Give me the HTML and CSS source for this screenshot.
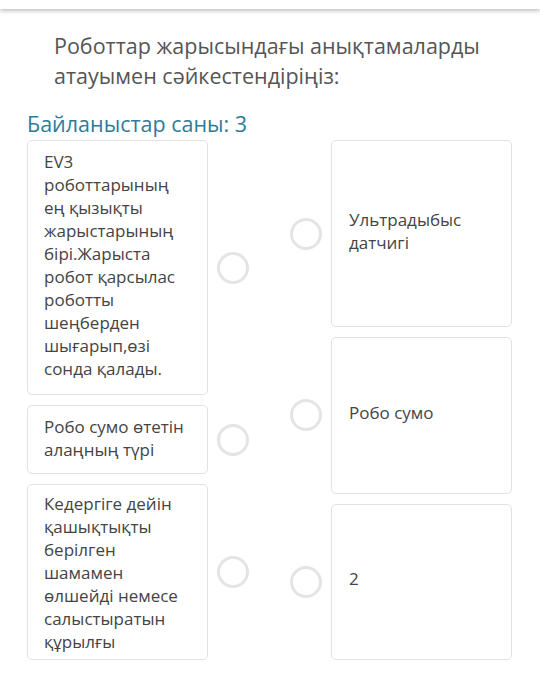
FILE: index.html
```html
<!DOCTYPE html>
<html lang="kk">
<head>
  <meta charset="UTF-8">
  <meta name="viewport" content="width=device-width, initial-scale=1.0">
  <title>Сәйкестендіру</title>
  <link rel="stylesheet" href="styles.css">
</head>
<body>
  <div class="topbar"></div>
  <div class="question">
    <h1>Роботтар жарысындағы анықтамаларды атауымен сәйкестендіріңіз:</h1>
  </div>
  <div class="count">Байланыстар саны: 3</div>
  <div class="match">
    <div class="column left">
      <div class="item">
        <div class="card tall">EV3 роботтарының ең қызықты жарыстарының бірі.Жарыста робот қарсылас роботты шеңберден шығарып,өзі сонда қалады.</div>
        <span class="dot"></span>
      </div>
      <div class="item">
        <div class="card">Робо сумо өтетін алаңның түрі</div>
        <span class="dot"></span>
      </div>
      <div class="item">
        <div class="card snug">Кедергіге дейін қашықтықты берілген шамамен өлшейді немесе салыстыратын құрылғы</div>
        <span class="dot"></span>
      </div>
    </div>
    <div class="column right">
      <div class="item first">
        <span class="dot"></span>
        <div class="card">Ультрадыбыс датчигі</div>
      </div>
      <div class="item">
        <span class="dot"></span>
        <div class="card">Робо сумо</div>
      </div>
      <div class="item">
        <span class="dot"></span>
        <div class="card">2</div>
      </div>
    </div>
  </div>
</body>
</html>
```

FILE: styles.css
```css
body {
  font-family: "Open Sans", Arial, sans-serif;
  margin: 0;
  padding: 0;
  background-color: #fff;
  color: #444;
}
.topbar {
  height: 9px;
  background: #fff;
  box-shadow: 0 2px 4px rgba(0, 0, 0, 0.25);
}
.question {
  padding: 22px 40px 0 54px;
}
.question h1 {
  margin: 0;
  font-size: 21.5px;
  font-weight: normal;
  line-height: 30px;
  color: #555;
}
.count {
  margin: 19px 0 0 27px;
  font-size: 21.5px;
  line-height: 28px;
  color: #2d7b99;
}
.match {
  display: flex;
  gap: 41px;
  margin: 2px 0 0 27px;
  width: 485px;
}
.column {
  display: flex;
  flex-direction: column;
  gap: 10px;
  width: 222px;
}
.item {
  display: flex;
  align-items: center;
  gap: 9px;
}
.card {
  width: 181px;
  box-sizing: border-box;
  border: 1px solid #e2e2e2;
  border-radius: 5px;
  padding: 9px 16px 12px;
  font-size: 17px;
  line-height: 23px;
  color: #444;
  flex-shrink: 0;
}
.card.tall {
  padding-bottom: 14px;
}
.card.snug {
  padding-top: 7px;
  padding-bottom: 6px;
}
.right .item {
  flex: 1;
  align-items: stretch;
}
.right .item.first {
  flex: 0 0 187px;
}
.right .dot {
  align-self: center;
}
.right .card {
  display: flex;
  align-items: center;
  padding: 10px 17px 16px;
}
.dot {
  width: 32px;
  height: 32px;
  box-sizing: border-box;
  border: 3px solid #e4e4e4;
  border-radius: 50%;
  flex-shrink: 0;
}
```
